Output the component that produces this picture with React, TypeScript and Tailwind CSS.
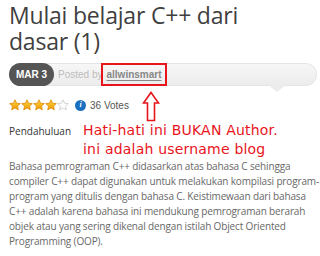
function Star({ filled }: { filled: boolean }) {
  return (
    <svg width="12" height="12" viewBox="0 0 24 24" className="shrink-0">
      <defs>
        <linearGradient id="gold" x1="0" y1="0" x2="0" y2="1">
          <stop offset="0" stopColor="#ffd54a" />
          <stop offset="1" stopColor="#f29a00" />
        </linearGradient>
      </defs>
      <polygon
        points="12,1.5 15.1,8.4 22.6,9.2 17,14.3 18.6,21.7 12,17.9 5.4,21.7 7,14.3 1.4,9.2 8.9,8.4"
        fill={filled ? "url(#gold)" : "#ffffff"}
        stroke={filled ? "#d98a00" : "#c8c8c8"}
        strokeWidth="1.6"
        strokeLinejoin="round"
      />
    </svg>
  );
}

const paragraph = [
  "Bahasa pemrograman C++ didasarkan atas bahasa C sehingga",
  "compiler C++ dapat digunakan untuk melakukan kompilasi program-",
  "program yang ditulis dengan bahasa C. Keistimewaan dari bahasa",
  "C++ adalah karena bahasa ini mendukung pemrograman berarah",
  "objek atau yang sering dikenal dengan istilah Object Oriented",
  "Programming (OOP).",
];

export default function App() {
  return (
    <div className="relative w-[320px] h-[256px] overflow-hidden bg-white px-[9px] font-['Open_Sans',sans-serif]">
      <h1 className="pt-[2px] text-[23px] font-medium leading-[26px] tracking-[-0.2px] text-[#3f3f3f]">
        <div>Mulai belajar C++ dari</div>
        <div>dasar (1)</div>
      </h1>

      {/* date / author bar */}
      <div className="relative mt-[9px] mr-[-6px] flex h-[23px] items-stretch rounded-[11px] border border-[#e4e4e4] bg-gradient-to-b from-[#f7f7f7] to-[#ececec] font-['Liberation_Sans',sans-serif]">
        <div className="-my-px -ml-px flex w-[45px] items-center justify-center rounded-full bg-[#555555] text-[10px] font-bold text-white">
          MAR 3
        </div>
        <span className="ml-[4px] self-center text-[10px] text-[#bdbdbd]">Posted by</span>
        <span className="-my-px -ml-[1px] flex items-center border-2 border-[#e8141c] px-[3px] text-[10px] font-bold text-[#888] underline underline-offset-2">
          allwinsmart
        </span>
        <div className="absolute left-[258px] top-[21px] h-0 w-0 border-x-[9px] border-t-[7px] border-x-transparent border-t-[#ececec]" />
      </div>

      {/* rating */}
      <div className="mt-[13px] flex h-[12px] items-center">
        <div className="flex">
          <Star filled />
          <Star filled />
          <Star filled />
          <Star filled />
          <Star filled={false} />
        </div>
        <div className="ml-[6px] flex h-[11px] w-[11px] items-center justify-center rounded-full bg-[#1b6fc0] text-[8px] font-bold italic leading-none text-white font-['Liberation_Serif',serif]">
          i
        </div>
        <span className="ml-[4px] text-[10px] text-[#555] font-['Liberation_Sans',sans-serif]">36 Votes</span>
      </div>

      {/* heading + annotation */}
      <div className="mt-[10px] flex">
        <span className="mt-[1px] h-[18px] w-[74px] shrink-0 text-[10px] leading-[18px] text-[#333]">
          Pendahuluan
        </span>
        <div className="font-['DejaVu_Sans',sans-serif] text-[14px] leading-[19px] tracking-[0.2px] text-[#e8141c]">
          <div>Hati-hati ini BUKAN Author.</div>
          <div>ini adalah username blog</div>
        </div>
      </div>

      <div className="text-[10px] leading-[15px] tracking-[-0.15px] text-[#686868]">
        {paragraph.map((line) => (
          <div key={line} className="whitespace-nowrap">
            {line}
          </div>
        ))}
      </div>

      {/* red annotation arrow */}
      <svg className="absolute left-[142px] top-[91px]" width="18" height="31" viewBox="0 0 18 31">
        <polygon
          points="9,1.5 16.5,12 12.5,12 12.5,29.5 5.5,29.5 5.5,12 1.5,12"
          fill="white"
          stroke="#e8141c"
          strokeWidth="1.6"
          strokeLinejoin="miter"
        />
      </svg>
    </div>
  );
}
